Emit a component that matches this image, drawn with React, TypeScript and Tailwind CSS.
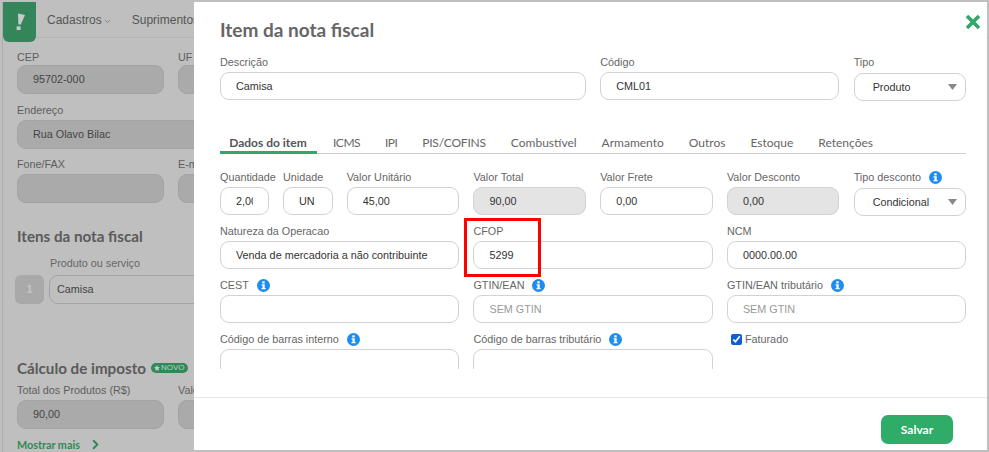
import React from "react";
import { ChevronRight } from "lucide-react";

const Info = () => (
  <svg width="13" height="13" viewBox="0 0 13 13" className="shrink-0">
    <circle cx="6.5" cy="6.5" r="6.5" fill="#1e8cf0" />
    <rect x="5.3" y="2.3" width="2.4" height="2.1" fill="#fff" />
    <path d="M4.6 5.3h3.1v3.7h.9v1.3H4.5V9h1V6.6h-.9z" fill="#fff" />
  </svg>
);

const Label = ({ children, info }: { children: React.ReactNode; info?: boolean }) => (
  <div className="flex h-[14px] items-center gap-[8px] whitespace-nowrap text-[10.8px] leading-[14px] text-[#666]">
    <span>{children}</span>
    {info && <Info />}
  </div>
);

const Input = ({ value, disabled, placeholder }: { value?: string; disabled?: boolean; placeholder?: string }) => (
  <input
    readOnly
    value={value ?? ""}
    placeholder={placeholder}
    className={`mt-[3px] block h-[28px] w-full rounded-[9px] border border-[#d2d2d2] px-[15px] font-['Liberation_Sans',sans-serif] text-[10.8px] text-[#333] outline-none placeholder:text-[#999] ${disabled ? "bg-[#e4e4e4]" : "bg-white"}`}
  />
);

const Field = ({ label, info, className, ...rest }: { label: string; info?: boolean; className?: string; value?: string; disabled?: boolean; placeholder?: string }) => (
  <div className={className}>
    <Label info={info}>{label}</Label>
    <Input {...rest} />
  </div>
);

const Select = ({ label, value, info }: { label: string; value: string; info?: boolean }) => (
  <div>
    <Label info={info}>{label}</Label>
    <div className="mt-[4px] flex h-[28px] items-center justify-between rounded-[9px] border border-[#d2d2d2] bg-white pl-[18px] pr-[8px] text-[10.8px] text-[#333]">
      <span>{value}</span>
      <svg width="9" height="6" viewBox="0 0 9 6"><path d="M0 0h9L4.5 6z" fill="#888" /></svg>
    </div>
  </div>
);

const BgField = ({ label, value, className, tight }: { label: string; value?: string; className?: string; tight?: boolean }) => (
  <div className={className}>
    <div className="h-[14px] text-[10.8px] leading-[14px] text-[#5e5e5e]">{label}</div>
    <div className={`flex h-[29px] items-center rounded-[9px] border border-[#a3a3a3] bg-[#aaaaaa] pl-[15px] text-[10.8px] text-[#444] ${tight ? "mt-[1px]" : "mt-[3px]"}`}>{value}</div>
  </div>
);

const tabs = [
  { t: "ICMS", c: "tracking-[-0.5px]" },
  { t: "IPI", c: "tracking-[-0.6px]" },
  { t: "PIS/COFINS", c: "tracking-[-0.2px]" },
  { t: "Combustível", c: "" },
  { t: "Armamento", c: "" },
  { t: "Outros", c: "" },
  { t: "Estoque", c: "" },
  { t: "Retenções", c: "" },
];

export default function App() {
  return (
    <div className="relative h-[452px] w-[989px] overflow-hidden bg-[#bfbfbf] font-['Liberation_Sans',sans-serif]">
      {/* Page behind the modal */}
      <div className="ml-[2px] mt-[2px] h-[450px] border-l border-[#a9b0ad]">
        <div className="flex h-[36px] items-start border-b border-[#b4b4b4]">
          <div className="flex h-[40px] w-[33px] items-center justify-center rounded-b-[6px] bg-[#35855a]">
            <svg width="10" height="18" viewBox="0 0 10 18">
              <path d="M3 0.5l7 1.5-4.2 9.5H3.4z" fill="#c9c9c9" />
              <rect x="1.6" y="13.4" width="4" height="3.6" fill="#c9c9c9" />
            </svg>
          </div>
          <div className="ml-[11px] mt-[11px] flex items-center gap-[2px] text-[12px] leading-[14px] text-[#555]">
            Cadastros
            <svg width="7" height="5" viewBox="0 0 7 5" className="mt-[3px]"><path d="M.8 1l2.7 2.6L6.2 1" fill="none" stroke="#777" strokeWidth="0.8" /></svg>
          </div>
          <div className="ml-[21px] mt-[11px] whitespace-nowrap text-[12px] leading-[14px] text-[#555]">Suprimentos</div>
        </div>
        <div className="pl-[14px]">
          <div className="mt-[12px] flex gap-[14px]">
            <BgField tight label="CEP" value="95702-000" className="w-[147px] shrink-0" />
            <BgField tight label="UF" className="w-[147px] shrink-0" />
          </div>
          <BgField label="Endereço" value="Rua Olavo Bilac" className="mt-[9px] w-[300px]" />
          <div className="mt-[8px] flex gap-[14px]">
            <BgField label="Fone/FAX" className="w-[147px] shrink-0" />
            <BgField label="E-mail" className="w-[147px] shrink-0" />
          </div>
          <div className="mt-[24px] font-['Lato',sans-serif] text-[15.2px] font-bold leading-[18px] text-[#5a5a5a]">Itens da nota fiscal</div>
          <div className="ml-[33px] mt-[11px] h-[14px] text-[10.8px] leading-[14px] text-[#666]">Produto ou serviço</div>
          <div className="-ml-[2px] mt-[5px] flex h-[29px] gap-[5px]">
            <div className="flex w-[29px] items-center justify-center rounded-[6px] bg-[#a9a9a9] text-[11px] font-bold text-[#c4c4c4]">1</div>
            <div className="flex w-[250px] items-center rounded-[9px] border border-[#a3a3a3] pl-[7px] text-[10.8px] text-[#444]">Camisa</div>
          </div>
          <div className="mt-[55px] flex h-[18px] items-center gap-[5px]">
            <span className="font-['Lato',sans-serif] text-[15.2px] font-bold leading-[18px] text-[#5a5a5a]">Cálculo de imposto</span>
            <span className="flex h-[10px] items-center gap-[1px] rounded-full bg-[#2f8a57] px-[3px] text-[8px] leading-[10px] text-[#c9c9c9]">
              <svg width="6" height="6" viewBox="0 0 10 10"><path d="M5 0l1.5 3.3L10 3.7 7.4 6.1 8.1 10 5 8.1 1.9 10l.7-3.9L0 3.7l3.5-.4z" fill="#c9c9c9" /></svg>
              NOVO
            </span>
          </div>
          <div className="mt-[6px] flex gap-[14px]">
            <BgField label="Total dos Produtos (R$)" value="90,00" className="w-[147px] shrink-0" />
            <BgField label="Valor" className="w-[147px] shrink-0" />
          </div>
          <div className="mt-[8px] flex items-center gap-[8px] font-['Lato',sans-serif] text-[10.8px] font-bold leading-[14px] text-[#2f8a57]">
            Mostrar mais
            <ChevronRight size={15} strokeWidth={3} className="text-[#2f8a57]" />
          </div>
        </div>
      </div>

      {/* Modal */}
      <div className="absolute bottom-[2px] left-[194px] right-[2px] top-[2px] flex flex-col bg-white">
        <div className="relative shrink-0 pl-[26px] pt-[18px]">
          <h1 className="font-['Lato',sans-serif] text-[19px] font-bold leading-[20px] text-[#666]">Item da nota fiscal</h1>
          <svg width="16" height="16" viewBox="0 0 16 16" className="absolute right-[6px] top-[12px]">
            <path d="M2 2l12 12M14 2L2 14" stroke="#2fa868" strokeWidth="3.6" fill="none" />
          </svg>
        </div>
        <div className="mb-[28px] flex-1 overflow-hidden pl-[26px] pr-[21px]">
          <div className="mt-[15px] grid w-[746px] grid-cols-6 gap-x-[14.4px]">
            <Field label="Descrição" value="Camisa" className="col-span-3" />
            <Field label="Código" value="CML01" className="col-span-2" />
            <Select label="Tipo" value="Produto" />
          </div>
          <div className="mt-[34px] flex h-[19px] w-[746px] items-start border-b border-[#cfcfcf] font-['Lato',sans-serif] text-[12px] leading-[16px] text-[#666]">
            <div className="-mb-px flex h-[19px] w-[97px] justify-center border-b-[3px] border-[#2fa868] pr-[1px] font-bold text-[#555]">Dados do item</div>
            <div className="ml-[16px] flex gap-[25px]">
              {tabs.map(({ t, c }) => (
                <span key={t} className={`whitespace-nowrap ${c}`}>{t}</span>
              ))}
            </div>
          </div>
          <div className="mt-[16px] grid w-[746px] grid-cols-6 gap-x-[14.4px]">
            <div className="flex gap-[14px]">
              <Field label="Quantidade" value="2,00" className="w-[49px] shrink-0" />
              <Field label="Unidade" value="UN" className="w-[50px] shrink-0" />
            </div>
            <Field label="Valor Unitário" value="45,00" />
            <Field label="Valor Total" value="90,00" disabled />
            <Field label="Valor Frete" value="0,00" />
            <Field label="Valor Desconto" value="0,00" disabled />
            <Select label="Tipo desconto" value="Condicional" info />
          </div>
          <div className="mt-[8px] grid w-[746px] grid-cols-3 gap-x-[14.4px]">
            <Field label="Natureza da Operacao" value="Venda de mercadoria a não contribuinte" />
            <Field label="CFOP" value="5299" />
            <Field label="NCM" value="0000.00.00" />
          </div>
          <div className="mt-[9px] grid w-[746px] grid-cols-3 gap-x-[14.4px]">
            <Field label="CEST" info />
            <Field label="GTIN/EAN" info placeholder="SEM GTIN" />
            <Field label="GTIN/EAN tributário" info placeholder="SEM GTIN" />
          </div>
          <div className="mt-[9px] grid w-[746px] grid-cols-3 gap-x-[14.4px]">
            <Field label="Código de barras interno" info />
            <Field label="Código de barras tributário" info />
            <label className="ml-[4px] mt-[-4px] flex h-[14px] items-center gap-[3px] self-start pt-[8px] text-[10.8px] text-[#666]">
              <input type="checkbox" readOnly checked className="m-0 h-[11px] w-[11px] accent-[#0b5ed7]" />
              Faturado
            </label>
          </div>
        </div>
        <div className="flex h-[53px] shrink-0 items-start justify-end border-t border-[#e8e8e8] pr-[34px] pt-[17px]">
          <button className="h-[29px] w-[72px] rounded-[7px] bg-[#2fac68] font-['Lato',sans-serif] text-[12px] font-bold text-white">Salvar</button>
        </div>
      </div>

      {/* Annotation */}
      <div className="absolute left-[464px] top-[218px] h-[59px] w-[77px] border-[3px] border-[#f00]" />
    </div>
  );
}
